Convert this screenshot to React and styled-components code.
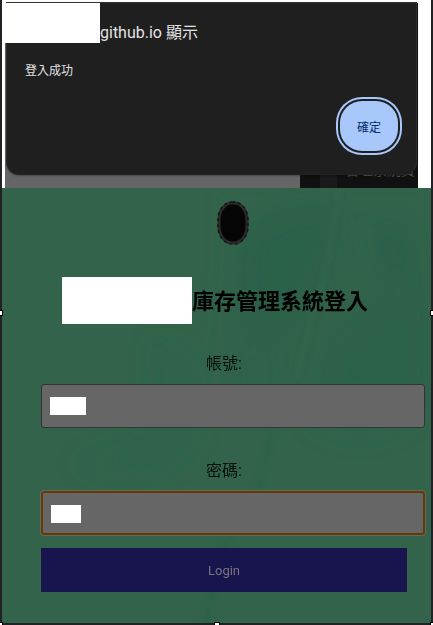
import React, { useState } from 'react';
import styled, { createGlobalStyle } from 'styled-components';

export default function App() {
  const [account, setAccount] = useState('');
  const [password, setPassword] = useState('');

  return (
    <>
      <GlobalStyle />
      <Frame>
        <Backdrop>
          <Page>
            <PageLight />
            <PageDark>
              <Column />
              <PageText>管理系統資</PageText>
            </PageDark>
          </Page>
          <Dialog role="alertdialog" aria-labelledby="dialog-title">
            <DialogTitle id="dialog-title">github.io 顯示</DialogTitle>
            <DialogMessage>登入成功</DialogMessage>
            <DialogActions>
              <ConfirmButton type="button">確定</ConfirmButton>
            </DialogActions>
          </Dialog>
          <HostMask />
        </Backdrop>

        <LoginPanel>
          <Texture />
          <Logo />
          <Heading>
            <NameMask />
            <Title>庫存管理系統登入</Title>
          </Heading>
          <Form onSubmit={(e) => e.preventDefault()}>
            <Label htmlFor="account">帳號:</Label>
            <Field>
              <Input id="account" type="text" value={account} onChange={(e) => setAccount(e.target.value)} />
              <ValueMask $width={36} />
            </Field>
            <Label htmlFor="password">密碼:</Label>
            <Field $active>
              <Input id="password" type="password" value={password} onChange={(e) => setPassword(e.target.value)} />
              <ValueMask $width={30} />
            </Field>
            <LoginButton type="submit">Login</LoginButton>
          </Form>
        </LoginPanel>

        <Handle $left="0%" $top="50%" />
        <Handle $left="100%" $top="50%" />
        <Handle $left="50%" $top="100%" />
        <Handle $left="0%" $top="100%" />
        <Handle $left="100%" $top="100%" />
      </Frame>
    </>
  );
}

function Logo() {
  return (
    <LogoSvg viewBox="0 0 32 44" aria-hidden="true">
      <rect x="2" y="2" width="28" height="40" rx="13" ry="17" fill="#050505" stroke="#2b292b" strokeWidth="3" />
      <rect x="1" y="1" width="30" height="42" rx="14" ry="18" fill="none" stroke="#151515" strokeWidth="1.5" strokeDasharray="3 3" />
    </LogoSvg>
  );
}

function Texture() {
  return (
    <TextureSvg viewBox="0 0 429 435" preserveAspectRatio="none" aria-hidden="true">
      <defs>
        <filter id="soft">
          <feGaussianBlur stdDeviation="12" />
        </filter>
        <filter id="softer-line">
          <feGaussianBlur stdDeviation="2" />
        </filter>
      </defs>
      <g filter="url(#soft)" fill="#28604a">
        <path d="M245 45 C290 20 330 10 335 30 C325 80 300 120 270 150 C235 150 235 80 245 45Z" opacity="0.5" />
        <path d="M370 40 C395 30 415 60 412 90 C395 100 375 80 370 40Z" opacity="0.7" />
        <path d="M335 150 C380 110 429 90 429 90 L429 200 C400 260 330 250 310 230Z" opacity="0.4" />
        <path d="M150 160 C190 150 205 200 190 250 C165 300 110 285 70 275 C120 270 170 250 150 160Z" opacity="0.4" />
        <path d="M240 150 C270 160 275 190 260 220 C235 220 230 180 240 150Z" opacity="0.3" />
        <path d="M230 0 H429 V210 H220Z" opacity="0.3" />
      </g>
      <g filter="url(#softer-line)" fill="none" strokeWidth="6">
        <path d="M337 0 C330 80 310 120 295 190" stroke="#3b6a50" opacity="0.3" />
        <path d="M270 240 C262 290 250 320 220 360 C215 390 205 410 205 435" stroke="#2a5f48" opacity="0.5" />
      </g>
    </TextureSvg>
  );
}

const GlobalStyle = createGlobalStyle`
  * {
    box-sizing: border-box;
  }

  body {
    margin: 0;
    background: #fff;
    font-family: Roboto, 'Noto Sans CJK TC', sans-serif;
  }

  #root {
    overflow: clip;
  }
`;

const Frame = styled.main`
  position: relative;
  display: flex;
  flex-direction: column;
  min-height: 100vh;
  background: #222127;
`;

const Backdrop = styled.section`
  position: relative;
  margin: 0 2px;
  padding: 0 2px 14px;
  border: solid #fff;
  border-width: 3px 13px 0 3px;
  background: #333335;
`;

const Page = styled.div`
  position: absolute;
  inset: 0;
  display: flex;
`;

const PageLight = styled.div`
  flex: 5;
  background: #656567;
`;

const PageDark = styled.div`
  flex: 2;
  min-width: 0;
  display: flex;
  align-items: flex-end;
  background: #111;
`;

const Column = styled.div`
  flex: none;
  align-self: stretch;
  width: 17px;
  margin-left: 20px;
  background: #1a1a1a;
`;

const PageText = styled.span`
  margin: 0 0 8px 8px;
  font-size: 14px;
  line-height: 20px;
  white-space: nowrap;
  color: #555;
`;

const Dialog = styled.div`
  position: relative;
  padding: 14px 16px 23px 18px;
  border-radius: 0 0 12px 12px;
  background: #1f1f1f;
  box-shadow: 0 1px 3px #0009, 0 0 0 1px #3a3a3c;
  color: #e3e3e3;
`;

const DialogTitle = styled.h2`
  margin: 0 0 0 75px;
  font-size: 16px;
  line-height: 32px;
  font-weight: 400;
`;

const DialogMessage = styled.p`
  margin: 10px 0 14px;
  font-size: 12px;
  line-height: 24px;
`;

const DialogActions = styled.div`
  display: flex;
  justify-content: flex-end;
  padding: 4px 2px 0 0;
`;

const ConfirmButton = styled.button`
  width: 58px;
  height: 50px;
  padding: 0;
  border: none;
  border-radius: 22px;
  background: #a8c7fa;
  box-shadow: 0 0 0 2px #1f1f1f, 0 0 0 4px #a8c7fa;
  font: 400 12px Roboto, 'Noto Sans CJK TC', sans-serif;
  color: #062e6f;
`;

const HostMask = styled.div`
  position: absolute;
  top: 0;
  left: -3px;
  width: 98px;
  height: 40px;
  background: #fff;
`;

const LoginPanel = styled.section`
  position: relative;
  flex: 1;
  margin: 0 2px 2px;
  padding: 13px 6px 30px 39px;
  background: #33644b;
  color: #000;
`;

const TextureSvg = styled.svg`
  position: absolute;
  inset: 0;
  width: 100%;
  height: 100%;
`;

const LogoSvg = styled.svg`
  position: relative;
  display: block;
  width: 32px;
  height: 44px;
  margin: 0 auto 32px;
`;

const Heading = styled.div`
  position: relative;
  display: flex;
  align-items: flex-end;
  margin: 0 0 24px 21px;
`;

const NameMask = styled.div`
  width: 130px;
  height: 47px;
  background: #fff;
`;

const Title = styled.h1`
  margin: 0;
  font-size: 22px;
  line-height: 44px;
  font-weight: 700;
`;

const Form = styled.form`
  position: relative;
  display: flex;
  flex-direction: column;
`;

const Label = styled.label`
  padding-right: 18px;
  margin-bottom: 4px;
  font-size: 16px;
  line-height: 32px;
  text-align: center;
  color: #06100b;
`;

const Field = styled.div`
  position: relative;
  height: 44px;
  margin-bottom: ${(props) => (props.$active ? 13 : 27)}px;
  border: ${(props) => (props.$active ? '2px solid #653c00' : '1px solid #333')};
  border-radius: 3px;
  background: #666;
  box-shadow: ${(props) => (props.$active ? '0 0 0 1px #666' : 'none')};
`;

const Input = styled.input`
  display: block;
  width: 100%;
  height: 100%;
  padding: 0 10px;
  border: none;
  outline: none;
  background: transparent;
  font-size: 16px;
`;

const ValueMask = styled.span`
  position: absolute;
  top: 12px;
  left: 8px;
  width: ${(props) => props.$width}px;
  height: 18px;
  background: #fff;
  pointer-events: none;
`;

const LoginButton = styled.button`
  height: 44px;
  margin-right: 18px;
  padding: 0;
  border: none;
  background: #18154e;
  font: 400 13px Roboto, sans-serif;
  color: #77757f;
`;

const Handle = styled.span`
  position: absolute;
  left: ${(props) => props.$left};
  top: ${(props) => props.$top};
  width: 6px;
  height: 6px;
  margin: -3px;
  border: 1px solid #000;
  background: #fff;
`;
